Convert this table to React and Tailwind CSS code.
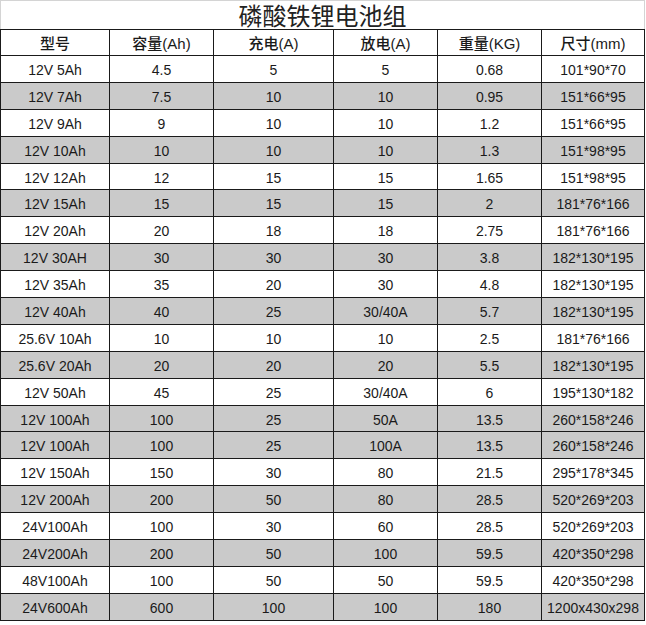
import React from "react";

const rows = [
  ["12V 5Ah", "4.5", "5", "5", "0.68", "101*90*70", false],
  ["12V 7Ah", "7.5", "10", "10", "0.95", "151*66*95", true],
  ["12V 9Ah", "9", "10", "10", "1.2", "151*66*95", false],
  ["12V 10Ah", "10", "10", "10", "1.3", "151*98*95", true],
  ["12V 12Ah", "12", "15", "15", "1.65", "151*98*95", false],
  ["12V 15Ah", "15", "15", "15", "2", "181*76*166", true],
  ["12V 20Ah", "20", "18", "18", "2.75", "181*76*166", false],
  ["12V 30AH", "30", "30", "30", "3.8", "182*130*195", true],
  ["12V 35Ah", "35", "20", "30", "4.8", "182*130*195", false],
  ["12V 40Ah", "40", "25", "30/40A", "5.7", "182*130*195", true],
  ["25.6V 10Ah", "10", "10", "10", "2.5", "181*76*166", false],
  ["25.6V 20Ah", "20", "20", "20", "5.5", "182*130*195", true],
  ["12V 50Ah", "45", "25", "30/40A", "6", "195*130*182", false],
  ["12V 100Ah", "100", "25", "50A", "13.5", "260*158*246", true],
  ["12V 100Ah", "100", "25", "100A", "13.5", "260*158*246", true],
  ["12V 150Ah", "150", "30", "80", "21.5", "295*178*345", false],
  ["12V 200Ah", "200", "50", "80", "28.5", "520*269*203", true],
  ["24V100Ah", "100", "30", "60", "28.5", "520*269*203", false],
  ["24V200Ah", "200", "50", "100", "59.5", "420*350*298", true],
  ["48V100Ah", "100", "50", "50", "59.5", "420*350*298", false],
  ["24V600Ah", "600", "100", "100", "180", "1200x430x298", true],
];

const headers = ["型号", "容量(Ah)", "充电(A)", "放电(A)", "重量(KG)", "尺寸(mm)"];
const widths = ["w-[109px]", "w-[104px]", "w-[120px]", "w-[104px]", "w-[104px]", "w-[103px]"];

export default function App() {
  return (
    <div className="w-[646px] h-[625px] bg-white overflow-hidden text-[#1a1a1a] font-['Liberation_Sans','Noto_Sans_CJK_SC',sans-serif]">
      <div className="w-[645px] h-[29px] border-t border-l border-r border-[#d4d4d4] flex items-center justify-center">
        <span className="text-[24px] leading-none pt-[3px] text-[#222]">磷酸铁锂电池组</span>
      </div>
      <table className="border-collapse table-fixed w-[645px]">
        <colgroup>
          {widths.map((w, i) => (
            <col key={i} className={w} />
          ))}
        </colgroup>
        <thead>
          <tr className="h-[26px]">
            {headers.map((h, i) => (
              <th key={i} className="border border-[#1a1a1a] text-[15px] font-medium leading-none text-center p-0 pt-[1px]">
                {h}
              </th>
            ))}
          </tr>
        </thead>
        <tbody>
          {rows.map((r, ri) => (
            <tr key={ri} className={`h-[26.9px] ${r[6] ? "bg-[#cacaca]" : "bg-white"}`}>
              {r.slice(0, 6).map((c, ci) => (
                <td key={ci} className="border border-[#1a1a1a] text-[14px] leading-none text-center p-0 pt-[2px] whitespace-nowrap">
                  {c}
                </td>
              ))}
            </tr>
          ))}
        </tbody>
      </table>
    </div>
  );
}
